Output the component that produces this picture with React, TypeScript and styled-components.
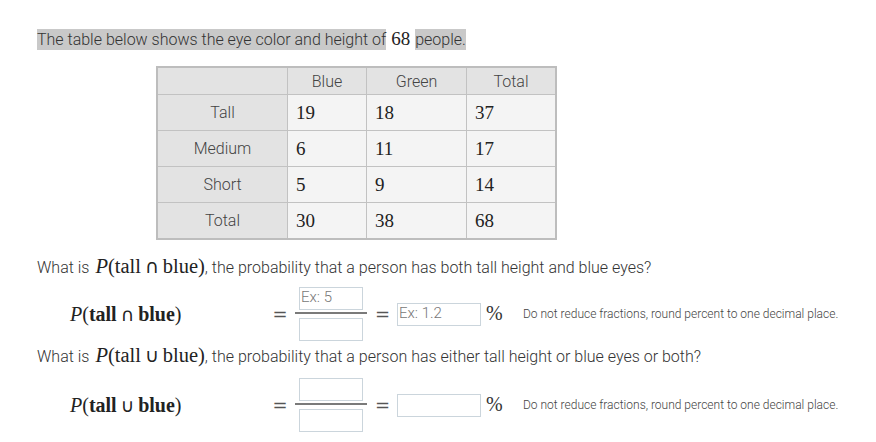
import React from "react";
import styled, { createGlobalStyle } from "styled-components";

const Global = createGlobalStyle`
  html, body { margin: 0; padding: 0; background: #fff; }
  body { font-family: Roboto, "Liberation Sans", sans-serif; color: #3a3a3a; }
`;

const Page = styled.div`
  padding: 28px 0 0 37px;
  width: 839px;
`;

const Intro = styled.p`
  margin: 0;
  font-size: 16px;
  line-height: 21px;
  font-weight: 300;
  color: #333;
`;

const Hi = styled.span`
  background: #c9c9c9;
  padding: 1px 0 1px 0;
`;

const MathNum = styled.span`
  font-family: "Liberation Serif", "DejaVu Serif", serif;
  font-size: 19px;
  color: #222;
  padding: 0 1px;
`;

const Table = styled.table`
  margin: 16px 0 0 119px;
  border-collapse: collapse;
  border: 2px solid #bdbdbd;
`;

const Th = styled.th<{ $w: number }>`
  width: ${(p) => p.$w}px;
  height: 26px;
  padding: 0;
  background: #e3e3e3;
  border: 1px solid #c2c2c2;
  font-weight: 300;
  font-size: 16px;
  color: #444;
  text-align: center;
`;

const RowLabel = styled.td`
  height: 35px;
  padding: 0;
  background: #e3e3e3;
  border: 1px solid #c2c2c2;
  font-weight: 300;
  font-size: 16px;
  color: #444;
  text-align: center;
`;

const Cell = styled.td`
  height: 35px;
  padding: 0 0 0 8px;
  background: #f4f4f4;
  border: 1px solid #c2c2c2;
  font-family: "Liberation Serif", "DejaVu Serif", serif;
  font-size: 19px;
  color: #222;
  text-align: left;
`;

const Question = styled.p<{ $top: number }>`
  margin: ${(p) => p.$top}px 0 0 0;
  height: 20px;
  font-size: 16px;
  line-height: 20px;
  font-weight: 300;
  color: #333;
`;

const M = styled.span`
  font-family: "Liberation Serif", "DejaVu Serif", serif;
  font-size: 20.5px;
  line-height: 14px;
  color: #222;
  margin-left: 2px;
`;
const MI = styled.i``;
const MB = styled.b``;
const Op = styled.span`
  font-family: "DejaVu Sans", sans-serif;
  font-size: 0.92em;
  font-weight: 400;
  margin: 0 4px;
`;

const FormulaRow = styled.div<{ $top: number }>`
  display: grid;
  grid-template-columns: 196px 28px 74px 29px 84px 24px auto;
  align-items: center;
  margin: ${(p) => p.$top}px 0 0 33px;
  height: 54px;
`;

const Label = styled.div`
  font-family: "Liberation Serif", "DejaVu Serif", serif;
  font-size: 20px;
  color: #222;
`;

const Eq = styled.div`
  font-family: "DejaVu Serif", "Liberation Serif", serif;
  font-size: 18px;
  color: #555;
  text-align: center;
`;

const Frac = styled.div`
  display: flex;
  flex-direction: column;
  align-items: center;
`;

const Bar = styled.div`
  width: 72px;
  height: 2px;
  background: #7a7a7a;
  margin: 2px 0 4px;
`;

const Box = styled.div<{ $w: number }>`
  box-sizing: border-box;
  width: ${(p) => p.$w}px;
  height: 23px;
  border: 1px solid #cbd5dc;
  background: #fff;
  font-size: 15px;
  font-weight: 300;
  color: #777;
  line-height: 19px;
  padding-left: 1px;
`;

const Pct = styled.div`
  font-family: "Liberation Serif", "DejaVu Serif", serif;
  font-size: 20px;
  color: #333;
  padding-left: 5px;
  margin-top: -2px;
`;

const Hint = styled.div`
  font-size: 12px;
  font-weight: 300;
  color: #444;
  padding-left: 18px;
  margin-top: -1px;
  white-space: nowrap;
`;

const cols = ["", "Blue", "Green", "Total"];
const widths = [129, 78, 99, 88];
const rows: [string, number[]][] = [
  ["Tall", [19, 18, 37]],
  ["Medium", [6, 11, 17]],
  ["Short", [5, 9, 14]],
  ["Total", [30, 38, 68]],
];

function Prob({ op }: { op: string }) {
  return (
    <>
      <MI>P</MI>(<MB>tall</MB>
      <Op>{op}</Op>
      <MB>blue</MB>)
    </>
  );
}

function Formula({ op, top, num, dec }: { op: string; top: number; num?: string; dec?: string }) {
  return (
    <FormulaRow $top={top}>
      <Label>
        <Prob op={op} />
      </Label>
      <Eq>=</Eq>
      <Frac>
        <Box $w={64}>{num}</Box>
        <Bar />
        <Box $w={64} />
      </Frac>
      <Eq>=</Eq>
      <Box $w={84}>{dec}</Box>
      <Pct>%</Pct>
      <Hint>Do not reduce fractions, round percent to one decimal place.</Hint>
    </FormulaRow>
  );
}

export default function App() {
  return (
    <Page>
      <Global />
      <Intro>
        <Hi>The table below shows the eye color and height of</Hi> <MathNum>68</MathNum>{" "}
        <Hi>people.</Hi>
      </Intro>
      <Table>
        <thead>
          <tr>
            {cols.map((c, i) => (
              <Th key={i} $w={widths[i]}>
                {c}
              </Th>
            ))}
          </tr>
        </thead>
        <tbody>
          {rows.map(([label, vals]) => (
            <tr key={label}>
              <RowLabel>{label}</RowLabel>
              {vals.map((v, i) => (
                <Cell key={i}>{v}</Cell>
              ))}
            </tr>
          ))}
        </tbody>
      </Table>
      <Question $top={18}>
        What is{" "}
        <M>
          <Prob op="∩" />
        </M>
        , the probability that a person has both tall height and blue eyes?
      </Question>
      <Formula op="∩" top={9} num="Ex: 5" dec="Ex: 1.2" />
      <Question $top={6}>
        What is{" "}
        <M>
          <Prob op="∪" />
        </M>
        , the probability that a person has either tall height or blue eyes or both?
      </Question>
      <Formula op="∪" top={11} />
    </Page>
  );
}
